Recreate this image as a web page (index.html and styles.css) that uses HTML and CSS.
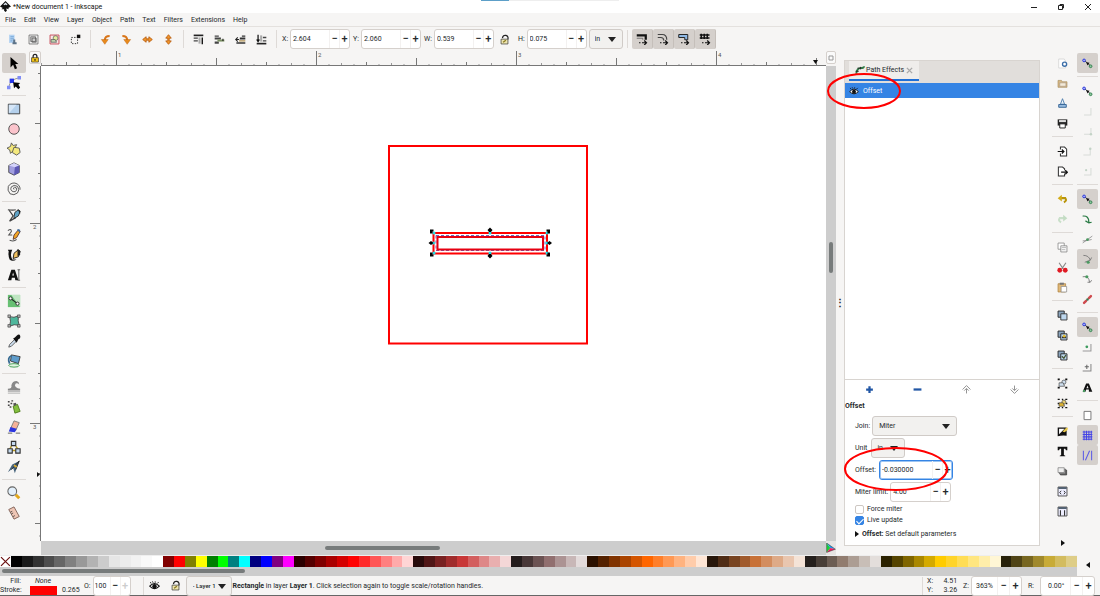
FILE: index.html
```html
<!DOCTYPE html>
<html lang="en">
<head>
<meta charset="utf-8">
<title>*New document 1 - Inkscape</title>
<link rel="stylesheet" href="styles.css">
</head>
<body>
<svg class="defs" aria-hidden="true">
  <symbol id="logo" viewBox="0 0 16 16"><path d="M8 0 16 8 12 10 13 12 9 11 10 14 8 16 6 14 6 12 2 12 4 10 0 8Z" fill="#111"/><path d="M8 2 11 5 9 6 8 5 6 6 5 5Z" fill="#dfe6ee"/></symbol>
  <symbol id="layersobj" viewBox="0 0 16 16"><path d="M3 1h8v12H3z" fill="#b4d3f2"/><path d="M5 4h5M5 7h5M5 10h3" stroke="#5b91c9"/><path d="M9 8h3v4h2v3H8v-3h1z" fill="#5d7388"/></symbol>
  <symbol id="selall" viewBox="0 0 16 16"><path d="M1.500 1.500h13v13h-13z" fill="#f4f4f4" stroke="#555"/><path d="M4 4h7v7H4zM6 6h6v6H6z" fill="#ccc" stroke="#555"/></symbol>
  <symbol id="selobj" viewBox="0 0 16 16"><path d="M1.500 1.500h13v13h-13z" fill="#f9e8e8" stroke="#c8505c" stroke-width="1.400"/><circle cx="9.500" cy="6" r="3.500" fill="#e6f0a0" stroke="#555"/><path d="M3 8h6l2 4H3z" fill="#bcd3ad" stroke="#555"/></symbol>
  <symbol id="desel" viewBox="0 0 16 16"><path d="M2 5h9v9H2z" fill="none" stroke="#333" stroke-width="1.400" stroke-dasharray="2 2"/><path d="M10 1h5v5h-5z" fill="#111"/></symbol>
  <symbol id="rotl" viewBox="0 0 16 16"><path d="M14 3Q7 3 7 9" fill="none" stroke="#d9761a" stroke-width="3"/><path d="M2 8h10l-5 7z" fill="#e88a1c" stroke="#b75a08" stroke-width=".6"/></symbol>
  <symbol id="rotr" viewBox="0 0 16 16"><path d="M2 3q7 0 7 6" fill="none" stroke="#d9761a" stroke-width="3"/><path d="M4 8h10l-5 7z" fill="#e88a1c" stroke="#b75a08" stroke-width=".6"/></symbol>
  <symbol id="fliph" viewBox="0 0 16 16"><path d="M1 8 6 4v3h4V4l5 4-5 4V9H6v3z" fill="#f0952c" stroke="#b75a08" stroke-width="1.200"/></symbol>
  <symbol id="flipv" viewBox="0 0 16 16"><path d="M8 1l4 5H9v4h3l-4 5-4-5h3V6H4z" fill="#f0952c" stroke="#b75a08" stroke-width="1.200"/></symbol>
  <symbol id="totop" viewBox="0 0 16 16"><path d="M1 2h14" stroke="#222" stroke-width="2.400"/><path d="M1 5h6v2H1zM1 9h6v2H1z" fill="#444"/><path d="M8 5h3v9H8z" fill="#aaa"/><path d="M13.500 15V5" stroke="#111" stroke-width="2"/></symbol>
  <symbol id="raise" viewBox="0 0 16 16"><path d="M1 2h6v2H1zM1 5h9v3H1zM1 11h6v3H1z" fill="#444"/><path d="M5 8h10v3H5z" fill="#7a8f62"/><path d="M13 10V7" stroke="#222" stroke-width="1.600"/></symbol>
  <symbol id="lower" viewBox="0 0 16 16"><path d="M10 2h5v2h-5zM7 5h8v3H7zM2 12h13v2H2z" fill="#333"/><path d="M6 9h9v2H6z" fill="#b59a62"/><path d="M1 8h5M4 5 1 8l3 3" fill="none" stroke="#222" stroke-width="1.600"/></symbol>
  <symbol id="tobot" viewBox="0 0 16 16"><path d="M1 14h14" stroke="#222" stroke-width="2.400"/><path d="M10 4h5v2h-5zM10 9h5v2h-5z" fill="#444"/><path d="M6 2h3v9H6z" fill="#aaa"/><path d="M3 1v10M1 8l2 3 2-3" fill="none" stroke="#111" stroke-width="1.800"/></symbol>
  <symbol id="lock" viewBox="0 0 16 16"><path d="M5 8V5a3 3 0 0 1 6 0v3" fill="none" stroke="#222" stroke-width="2"/><path d="M2.500 7.500h11v7h-11z" fill="#f5c518" stroke="#222"/><path d="M8 9.500v3" stroke="#222" stroke-width="2"/></symbol>
  <symbol id="unlock" viewBox="0 0 16 16"><path d="M5 6Q6 1 10 2t3 6" fill="none" stroke="#222" stroke-width="1.800"/><path d="M3 7.500h10v7H3z" fill="#eee6b0" stroke="#333"/><path d="M6 12l4-3" stroke="#8a7a20" stroke-width="2"/></symbol>
  <symbol id="trstroke" viewBox="0 0 16 16"><path d="M1 3h12v6" fill="none" stroke="#111" stroke-width="3"/><path d="M1 7h8v2" fill="none" stroke="#555"/><path d="M4 13h2M8 13h6M11 10l3 3-3 3" fill="none" stroke="#111" stroke-width="1.600"/></symbol>
  <symbol id="trcorner" viewBox="0 0 16 16"><path d="M1 2h6q6 0 6 7M1 6h4q4 0 4 4" fill="none" stroke="#444" stroke-width="1.600"/><path d="M4 13h2M8 13h6M11 10l3 3-3 3" fill="none" stroke="#111" stroke-width="1.600"/></symbol>
  <symbol id="trgrad" viewBox="0 0 16 16"><path d="M1 2h12v7H9V6H1z" fill="#8fb8e4" stroke="#222" stroke-width="1.300"/><path d="M4 13h2M8 13h6M11 10l3 3-3 3" fill="none" stroke="#111" stroke-width="1.600"/></symbol>
  <symbol id="trpat" viewBox="0 0 16 16"><path d="M1 2.500h13M1 6.500h13M3 1v7M7 1v7M11 1v7" stroke="#111" stroke-width="2"/><path d="M4 13h2M8 13h6M11 10l3 3-3 3" fill="none" stroke="#111" stroke-width="1.600"/></symbol>
  <symbol id="t-select" viewBox="0 0 16 16"><path d="M4 1v12l3-3 2 5 2.500-1L9.500 9H13z" fill="#000"/></symbol>
  <symbol id="t-node" viewBox="0 0 16 16"><path d="M2 13Q3 4 14 2" fill="none" stroke="#888"/><path d="M0 11h4v4H0zM12 0h4v4h-4z" fill="#7f8cf5"/><path d="M3 3h5v5H3z" fill="#2737e8"/><path d="M7 7l8 1-2 2 2 3-2 2-3-3-2 2z" fill="#000"/></symbol>
  <symbol id="t-rect" viewBox="0 0 16 16"><path d="M1.500 2.500h13v11h-13z" fill="#b4d0ec" stroke="#333"/><path d="M2 13V3h9z" fill="#d5e6f8"/></symbol>
  <symbol id="t-circ" viewBox="0 0 16 16"><circle cx="8" cy="8" r="6" fill="#fbc4cc" stroke="#444"/></symbol>
  <symbol id="t-star" viewBox="0 0 16 16"><path d="M5 1l2 3 4-1-2 4 2 3-4 0-3 3-1-4-3-2 4-2z" fill="#f3e77a" stroke="#555"/><path d="M8 6l6 1 1 5-4 3-5-3z" fill="#f5ea7e" stroke="#555"/></symbol>
  <symbol id="t-cube" viewBox="0 0 16 16"><path d="M8 1l6 3v8l-6 3-6-3V4z" fill="#a19edf" stroke="#444"/><path d="M2 4l7 2 5-2-6-3z" fill="#d4d3fa"/><path d="M9 6l5-2v8l-6 3z" fill="#5c57b4"/></symbol>
  <symbol id="t-spiral" viewBox="0 0 16 16"><path d="M8 8.500q-1.500-2 .5-2.500 3 0 2.500 3-1 3-4 2Q3 9.500 5 5.500q3-3 7-.5 3 4 0 7.500-4 3.500-8.500 1-3.500-4-2-8.500Q4 .8 9 1.200q6 1.500 6 7.500" fill="none" stroke="#555" stroke-width="1.100"/></symbol>
  <symbol id="t-pen" viewBox="0 0 16 16"><path d="M1 2q6 1 9 0M2 2l5 7-4 6 7-4" fill="none" stroke="#444" stroke-width="1.400"/><path d="M8 10l1-5 4-3 2 2-2 5-5 3z" fill="#5fa3c7" stroke="#222"/><path d="M12 1l3 2v4z" fill="#222"/></symbol>
  <symbol id="t-pencil" viewBox="0 0 16 16"><path d="M1 3q4-3 4 1L2 8h4M3 14q5 2 8-1" fill="none" stroke="#555" stroke-width="1.200"/><path d="M7 13l1-5 5-6 2 2-4 7z" fill="#f4a623" stroke="#533"/><path d="M12 1l3 1v3l-3-2z" fill="#3a6ea5"/></symbol>
  <symbol id="t-callig" viewBox="0 0 16 16"><path d="M1 2h5Q3 8 6 13h5Q6 16 3 13 1 8 2 4z" fill="#111"/><path d="M7 12l1-6 5-4 2 2-2 6z" fill="#f0c060" stroke="#111"/><path d="M12 1l3 2v5l-3 1z" fill="#222"/></symbol>
  <symbol id="t-text" viewBox="0 0 16 16"><path d="M1 14 5 2h4l4 12H9.500L9 11H5.500L5 14zM6 8.500h2L7 5z" fill="#111" fill-rule="evenodd"/><path d="M12 2h3M12 14h3M13.500 2v12" stroke="#555"/></symbol>
  <symbol id="t-grad" viewBox="0 0 16 16"><path d="M1 1h14v14H1z" fill="#67c073"/><path d="M5 1h10v14z" fill="#bfe5c2"/><path d="M4 5l8 6" stroke="#222" stroke-width="1.300"/><circle cx="4" cy="5" r="1.800" fill="#fff" stroke="#222"/><circle cx="12" cy="11" r="1.800" fill="#fff" stroke="#222"/></symbol>
  <symbol id="t-mesh" viewBox="0 0 16 16"><path d="M3 3q5 2 10-1-1 6 1 11-6-2-11 1 2-6 0-11z" fill="#4fb79c" stroke="#444"/><path d="M1 1h3v3H1zM12 1h3v3h-3zM1 12h3v3H1zM12 12h3v3h-3z" fill="#aaa" stroke="#444" stroke-width=".7"/></symbol>
  <symbol id="t-drop" viewBox="0 0 16 16"><path d="M2 15l1-3 6-6 2 2-6 6z" fill="#cde" stroke="#555"/><path d="M7 5l2-1 2-2q3-3 4 0t-2 4l-1 2-1 2z" fill="#111"/></symbol>
  <symbol id="t-bucket" viewBox="0 0 16 16"><path d="M5 1l10 2-2 8-9-3z" fill="#5e9ccb" stroke="#333"/><path d="M5 2Q0 4 3 11" fill="none" stroke="#356a92" stroke-width="2"/><ellipse cx="8" cy="13" rx="6" ry="2" fill="#dff3e0" stroke="#37984b"/></symbol>
  <symbol id="t-tweak" viewBox="0 0 16 16"><path d="M1 10q5 0 4-4 1-5 6-5 3 1 3 4-2-2-4-1-2 2 0 4 2 2 5 2v2H1z" fill="#888"/><path d="M1 13h14M1 15h14" stroke="#aaa"/></symbol>
  <symbol id="t-spray" viewBox="0 0 16 16"><path d="M7 7l5-2 3 8-6 2z" fill="#84bf3f" stroke="#4b7a18"/><path d="M7 4l3-1 1 2-3 2z" fill="#555"/><path d="M1 2h2M4 4h2M1 6h2M5 1h2M3 8h2" stroke="#444" stroke-width="1.600"/></symbol>
  <symbol id="t-eraser" viewBox="0 0 16 16"><path d="M8 1l6 2-4 9-6-2z" fill="#f6b298" stroke="#777"/><path d="M4 8l7 2-2 4-7-1z" fill="#2b35e0"/><path d="M1 15h5M10 15h5" stroke="#555"/></symbol>
  <symbol id="t-conn" viewBox="0 0 16 16"><path d="M5 7l-2 4M10 7l3 4M6 12h4" stroke="#b89a20" stroke-width="1.600"/><path d="M5 1.500h5v5H5zM1 10h5v5H1zM10 10h5v5h-5z" fill="#c5daef" stroke="#333" stroke-width="1.300"/></symbol>
  <symbol id="t-lpe" viewBox="0 0 16 16"><path d="M14 1 6 5 1 14l6-5 2 6 2-6z" fill="#47647c"/><path d="M14 1 5 11M14 1l-4 10" stroke="#222"/><path d="M8 6l3 2" stroke="#e0b030" stroke-width="2"/></symbol>
  <symbol id="t-zoom" viewBox="0 0 16 16"><path d="M10 10l4 4" stroke="#e2a81d" stroke-width="3.500"/><circle cx="6" cy="6" r="5" fill="#e3f0fb" stroke="#666" stroke-width="1.200"/></symbol>
  <symbol id="t-measure" viewBox="0 0 16 16"><path d="M2 4l6-3 6 11-6 3z" fill="#efc6b5" stroke="#7a5a50"/><path d="M4 7l2-1M5 9l2-1M7 12l2-1" stroke="#444"/></symbol>
  <symbol id="c-new" viewBox="0 0 16 16"><path d="M2.500 1.500h8l2 3v10h-10z" fill="#fff" stroke="#ccc"/><circle cx="11" cy="9" r="3" fill="#fff" stroke="#3c6ea8" stroke-width="2"/></symbol>
  <symbol id="c-open" viewBox="0 0 16 16"><path d="M1.500 3.500h5l1 2h7v8h-13z" fill="#d8b984" stroke="#a88d5f"/><path d="M4 7h9v5H4z" fill="#f3ead8" stroke="#a98"/></symbol>
  <symbol id="c-save" viewBox="0 0 16 16"><path d="M8 1l3 8H5z" fill="#eef4fa" stroke="#4778aa" stroke-width="1.300"/><path d="M2.500 9.500h11v4h-11z" fill="#9bbfe2" stroke="#2d5d90" stroke-width="1.300"/></symbol>
  <symbol id="c-print" viewBox="0 0 16 16"><path d="M1 2h14v9H1z" fill="#222"/><path d="M3 3h10v3H3z" fill="#ddd"/><path d="M4 8.500h8v6H4z" fill="#fff" stroke="#222" stroke-width="1.400"/></symbol>
  <symbol id="c-import" viewBox="0 0 16 16"><path d="M5 5V1.500h6l3 3v10H5V11" fill="#fff" stroke="#333" stroke-width="1.500"/><path d="M1 8h8M7 5l3 3-3 3" fill="none" stroke="#111" stroke-width="1.800"/></symbol>
  <symbol id="c-export" viewBox="0 0 16 16"><path d="M11 6V4L8 1.500H2v13h9V11" fill="#fff" stroke="#333" stroke-width="1.500"/><path d="M6 9h8M12 6l3 3-3 3" fill="none" stroke="#111" stroke-width="1.800"/></symbol>
  <symbol id="c-undo" viewBox="0 0 16 16"><path d="M5 6h7q3 4-2 6" fill="none" stroke="#b8940a" stroke-width="3"/><path d="M1 6l6-5v10z" fill="#d3ac18"/></symbol>
  <symbol id="c-redo" viewBox="0 0 16 16"><path d="M11 6H4q-3 4 2 6" fill="none" stroke="#c9dfc9" stroke-width="3"/><path d="M15 6 9 1v10z" fill="#c3dcc3"/></symbol>
  <symbol id="c-copy" viewBox="0 0 16 16"><path d="M1.500 1.500h9v9h-9z" fill="#fff" stroke="#777"/><path d="M5.500 5.500h9v9h-9z" fill="#f4f4f4" stroke="#777"/><path d="M7 8h6M7 11h5" stroke="#aaa"/></symbol>
  <symbol id="c-cut" viewBox="0 0 16 16"><path d="M3 1l6 9M13 1 7 10" stroke="#888" stroke-width="1.600"/><circle cx="4" cy="12" r="3.500" fill="#e01b24"/><circle cx="12" cy="12" r="3.500" fill="#e01b24"/></symbol>
  <symbol id="c-paste" viewBox="0 0 16 16"><path d="M1.500 2.500h11v12h-11z" fill="#e0b878" stroke="#a97c38"/><path d="M4 1h6v3H4z" fill="#777"/><path d="M6 6.500h8v8H6z" fill="#fff" stroke="#888"/></symbol>
  <symbol id="c-dup" viewBox="0 0 16 16"><path d="M1.500 1.500h9v9h-9z" fill="#8aa4bc" stroke="#222" stroke-width="1.300"/><path d="M5.500 5.500h9v9h-9z" fill="#bdd7ee" stroke="#333" stroke-width="1.300"/></symbol>
  <symbol id="c-clone" viewBox="0 0 16 16"><path d="M1.500 1.500h9v9h-9z" fill="#8aa4bc" stroke="#222" stroke-width="1.300"/><path d="M5.500 5.500h9v9h-9z" fill="#bdd7ee" stroke="#222" stroke-width="1.300"/><path d="M7 12h6v-3H8z" fill="#222"/><circle cx="10.500" cy="9" r="2" fill="#e3bc30"/></symbol>
  <symbol id="c-unclone" viewBox="0 0 16 16"><path d="M1.500 1.500h9v9h-9z" fill="#8aa4bc" stroke="#222" stroke-width="1.300"/><path d="M5.500 5.500h9v9h-9z" fill="#bdd7ee" stroke="#222" stroke-width="1.300"/><path d="M7 9l3 3 3-5" fill="none" stroke="#453" stroke-width="1.800"/></symbol>
  <symbol id="c-group" viewBox="0 0 16 16"><path d="M1 2h3M12 2h3M1 14h3M12 14h3" stroke="#111" stroke-width="2.400"/><circle cx="10" cy="6" r="3" fill="#cfe0f0" stroke="#444"/><path d="M3 7h6l2 5H3z" fill="#cfe0f0" stroke="#444"/></symbol>
  <symbol id="c-ungroup" viewBox="0 0 16 16"><path d="M1 2h3M7 2h2M12 2h3M1 14h3M7 14h2M12 14h3M2 7v2M14 7v2" stroke="#111" stroke-width="2"/><circle cx="10" cy="6" r="3" fill="#e8cf70" stroke="#444"/><path d="M3 7h6l2 5H3z" fill="#e0b530" stroke="#444"/></symbol>
  <symbol id="c-fill" viewBox="0 0 16 16"><path d="M1 2h13v12q-7-1-13 1z" fill="#111"/><path d="M3 12V4h8z" fill="#fff"/><path d="M8 8l5-5 3-1-1 4-4 3z" fill="#e8c84a"/></symbol>
  <symbol id="c-text" viewBox="0 0 16 16"><path d="M1 1h14v5h-2L12 4h-2v9l2 1v1H4v-1l2-1V4H4L3 6H1z" fill="#111"/></symbol>
  <symbol id="c-layers" viewBox="0 0 16 16"><path d="M5 6h9v7H5z" fill="#666" stroke="#333"/><path d="M3.500 4.500h9v7h-9z" fill="#999" stroke="#555"/><path d="M1.500 2.500h9v7h-9z" fill="#eee" stroke="#777"/></symbol>
  <symbol id="c-xml" viewBox="0 0 16 16"><path d="M1.500 1.500h13v13h-13z" fill="#eef" stroke="#444" stroke-width="1.300"/><path d="M2 3h12" stroke="#456" stroke-width="2.500"/><path d="M6 7 4 9.500 6 12M10 7l2 2.500-2 2.500" fill="none" stroke="#222" stroke-width="1.300"/></symbol>
  <symbol id="c-align" viewBox="0 0 16 16"><path d="M1.500 1.500h13v13h-13z" fill="#eef" stroke="#444" stroke-width="1.300"/><path d="M2 3h12" stroke="#456" stroke-width="2.500"/><path d="M5 6v8M11 6v8" stroke="#333" stroke-width="1.600"/></symbol>
  <symbol id="s-main" viewBox="0 0 16 16"><path d="M4 4l9 8" stroke="#333" stroke-width="1.300"/><circle cx="3" cy="3.500" r="2" fill="#aab0ff" stroke="#2230d8" stroke-width="1.300"/><path d="M6 6l5 1-3 4z" fill="#111"/><circle cx="12.500" cy="12" r="2" fill="#8fc9a1" stroke="#2b7a48" stroke-width="1.300"/></symbol>
  <symbol id="s-corner" viewBox="0 0 16 16"><path d="M3 13h10V3" fill="none" stroke="#d7dcd7" stroke-width="1.500"/></symbol>
  <symbol id="s-cornerdot" viewBox="0 0 16 16"><path d="M3 12h10V3" fill="none" stroke="#d7dcd7" stroke-width="1.500"/><circle cx="13" cy="12" r="1.800" fill="#c3d3c6"/></symbol>
  <symbol id="s-cornertop" viewBox="0 0 16 16"><path d="M2 13h10V3" fill="none" stroke="#d7dcd7" stroke-width="1.500"/><circle cx="12" cy="4" r="1.800" fill="#c3d3c6"/></symbol>
  <symbol id="s-cornermid" viewBox="0 0 16 16"><path d="M3 13h10V3" fill="none" stroke="#d7dcd7" stroke-width="1.500"/><circle cx="6" cy="6" r="1.600" fill="#c3d3c6"/></symbol>
  <symbol id="s-path" viewBox="0 0 16 16"><path d="M1 3q9-1 9 9M5 10l5 3 4-1" fill="none" stroke="#287a43" stroke-width="1.800"/></symbol>
  <symbol id="s-cross" viewBox="0 0 16 16"><path d="M1 13 15 3M1 10q6 0 13-2" fill="none" stroke="#777"/><circle cx="8" cy="8" r="2" fill="#4a9960"/></symbol>
  <symbol id="s-cusp" viewBox="0 0 16 16"><path d="M2 2q8 0 10 7l-8 3M12 9l2-4" fill="none" stroke="#777" stroke-width="1.300"/><circle cx="9" cy="12" r="2.300" fill="#4a9960"/></symbol>
  <symbol id="s-smooth" viewBox="0 0 16 16"><path d="M1 4q9-2 10 8M8 12h4l2-3" fill="none" stroke="#777" stroke-width="1.300"/><circle cx="7" cy="4" r="2.300" fill="#4a9960"/></symbol>
  <symbol id="s-mid" viewBox="0 0 16 16"><path d="M3 13 13 3" stroke="#822" stroke-width="1"/><path d="M3 13l3-3M10 6l3-3" stroke="#cf4a4e" stroke-width="3.500" stroke-linecap="round"/><circle cx="8" cy="8" r="1.800" fill="#3a7950"/></symbol>
  <symbol id="s-center" viewBox="0 0 16 16"><path d="M1 13h12V3" fill="none" stroke="#999" stroke-width="1.500"/><circle cx="7" cy="7" r="2" fill="#3d9b5e"/></symbol>
  <symbol id="s-rot" viewBox="0 0 16 16"><path d="M1 13h12V3" fill="none" stroke="#888" stroke-width="1.500"/><path d="M7 4v6M4 7h6" stroke="#666" stroke-width="1.500"/></symbol>
  <symbol id="s-text" viewBox="0 0 16 16"><path d="M1 14 6 2h4l5 12h-5v-3H6l-1 3zM6.500 9h3L8 5z" fill="#111" fill-rule="evenodd"/><circle cx="3" cy="13" r="1.800" fill="#4a9960"/></symbol>
  <symbol id="s-page" viewBox="0 0 16 16"><path d="M3 2h10v12H3z" fill="#fff" stroke="#777" stroke-width="1.400"/></symbol>
  <symbol id="s-grid" viewBox="0 0 16 16"><path d="M1 3h14M1 6.500h14M1 10h14M1 13.500h14M3 1v14M6.500 1v14M10 1v14M13.500 1v14" stroke="#4747e6" stroke-width="1.500"/></symbol>
  <symbol id="s-guide" viewBox="0 0 16 16"><path d="M2 1v14M14 1v14M5 15 11 1" stroke="#5b5be6" stroke-width="1.500"/></symbol>
  <symbol id="eye" viewBox="0 0 16 16"><path d="M1 9q7-8 14 0-7 7-14 0z" fill="#fff" stroke="#111" stroke-width="1.500"/><circle cx="8" cy="9" r="3.200" fill="#111"/><path d="M3 5 2 3M6 4 5 2M9 4V2M12 5l2-2" stroke="#111" stroke-width="1.300"/></symbol>
  <symbol id="fx" viewBox="0 0 16 16"><path d="M2 14Q3 5 9 5t5-3" fill="none" stroke="#2f7a45" stroke-width="3"/><path d="M1 10h5M4 5h5M9 7V3" stroke="#222" stroke-width="1.500"/></symbol>
  <symbol id="up" viewBox="0 0 16 16"><path d="M1 8l7-7 7 7M4 10l4-4 4 4M8 7v8" fill="none" stroke="#888" stroke-width="1.600"/></symbol>
  <symbol id="down" viewBox="0 0 16 16"><path d="M1 8l7 7 7-7M4 6l4 4 4-4M8 1v8" fill="none" stroke="#888" stroke-width="1.600"/></symbol>
  <symbol id="cms" viewBox="0 0 16 16"><path d="M1 0v15l6-7z" fill="#19d23a"/><path d="M1 0l14 10-8-2z" fill="#1898ed"/><path d="M15 10 7 8 1 15z" fill="#ef2060"/><path d="M1 0l14 10-14 5z" fill="none" stroke="#333" stroke-width=".8"/></symbol>
</svg>

<div class="app">
  <header class="titlebar">
    <svg class="logo"><use href="#logo"/></svg>
    <h1>*New document 1 - Inkscape</h1>
    <div class="shade"></div>
    <div class="winbtns">
      <button aria-label="Minimize"><svg viewBox="0 0 8 8"><path d="M1 4.500h6" stroke="#222"/></svg></button>
      <button aria-label="Restore"><svg viewBox="0 0 8 8"><path d="M1.500 2.500h4v4h-4zM3 2.500v-1h3.500V5H6" fill="none" stroke="#222"/></svg></button>
      <button aria-label="Close"><svg viewBox="0 0 8 8"><path d="M1 1l6 6M7 1 1 7" stroke="#222"/></svg></button>
    </div>
  </header>
  <nav class="menubar">
    <button>File</button><button>Edit</button><button>View</button><button>Layer</button><button>Object</button><button>Path</button><button>Text</button><button>Filters</button><button>Extensions</button><button>Help</button>
  </nav>
  <div class="toolbar">
    <div class="icons" data-icons="layersobj selall selobj desel | rotl rotr fliph flipv | totop raise lower tobot |"></div>
    <label class="field"><span>X:</span><span class="spin"><input value="2.604"><button>−</button><button>+</button></span></label>
    <label class="field"><span>Y:</span><span class="spin"><input value="2.060"><button>−</button><button>+</button></span></label>
    <label class="field"><span>W:</span><span class="spin"><input value="0.539"><button>−</button><button>+</button></span></label>
    <button class="ibtn" aria-label="Lock ratio"><svg><use href="#unlock"/></svg></button>
    <label class="field"><span>H:</span><span class="spin"><input value="0.075"><button>−</button><button>+</button></span></label>
    <span class="drop unit"><select aria-label="Unit"><option>in</option></select></span>
    <i class="vsep"></i>
    <div class="icons toggles" data-icons="trstroke* trcorner* trgrad* trpat*"></div>
  </div>

  <div class="body">
    <div class="left">
      <main class="work">
        <aside class="tools" data-icons="t-select* t-node | t-rect t-circ t-star t-cube t-spiral | t-pen t-pencil t-callig t-text | t-grad t-mesh t-drop t-bucket | t-tweak t-spray t-eraser t-conn t-lpe | t-zoom t-measure"></aside>
        <section class="view">
          <button class="guidelock" aria-label="Lock guides"><svg><use href="#lock"/></svg></button>
          <svg class="hruler">
            <defs><pattern id="hp" x="75" width="200" height="15" patternUnits="userSpaceOnUse">
              <path d="M.5 0v15M50.500 11v4M100.500 7v8M150.500 11v4" stroke="#777" fill="none"/>
              <path d="M13 13v2M25.500 12v3M38 13v2M63 13v2M75.500 12v3M88 13v2M113 13v2M125.500 12v3M138 13v2M163 13v2M175.500 12v3M188 13v2" stroke="#999" fill="none"/></pattern></defs>
            <rect width="100%" height="15" fill="url(#hp)"/>
            <path d="M0 14.500h2000" stroke="#777"/>
            <text x="77" y="6">1</text><text x="277" y="6">2</text><text x="477" y="6">3</text><text x="677" y="6">4</text>
            <path d="M772 9h5l-2.500 4z" fill="#111"/>
          </svg>
          <button class="zoomlock" aria-label="Sticky zoom"><svg viewBox="0 0 8 8"><path d="M2 2h4v4H2z" fill="none" stroke="#999"/></svg></button>
          <svg class="vruler">
            <defs><pattern id="vp" y="157" width="12" height="200" patternUnits="userSpaceOnUse">
              <path d="M1 .5h11M9 50.500h3M6 100.500h6M9 150.500h3" stroke="#777" fill="none"/>
              <path d="M10 13h2M10 25.500h2M10 38h2M10 63h2M10 75.500h2M10 88h2M10 113h2M10 125.500h2M10 138h2M10 163h2M10 175.500h2M10 188h2" stroke="#999" fill="none"/></pattern></defs>
            <rect width="12" height="100%" fill="url(#vp)"/>
            <path d="M11.500 0v2000" stroke="#777"/>
            <text x="4" y="163">2</text><text x="4" y="363">3</text>
            <path d="M8 406v5l3-2.500z" fill="#111"/>
          </svg>
          <svg class="canvas">
            <g transform="translate(-41 -66)" fill="none">
              <rect x="389" y="146" width="198" height="197.500" stroke="#f00" stroke-width="2"/>
              <rect x="433.500" y="233" width="113.500" height="20.500" stroke="#f00" stroke-width="2"/>
              <rect x="436" y="235.500" width="109" height="15" stroke="#4a3fb0" stroke-width=".8" stroke-dasharray="3 2"/>
              <rect x="437.500" y="237" width="105.500" height="12.500" stroke="#e60012" stroke-width="2"/>
              <g fill="#1fe0e8">
                <circle cx="434" cy="233" r="1.500"/><circle cx="490" cy="233" r="1.500"/><circle cx="547" cy="233" r="1.500"/>
                <circle cx="433.500" cy="243" r="1.500"/><circle cx="547" cy="243" r="1.500"/>
                <circle cx="434" cy="253" r="1.500"/><circle cx="490" cy="253" r="1.500"/><circle cx="547" cy="253" r="1.500"/>
              </g>
              <path d="M430 229.500h3.500v2h-1v2H430zM550 229.500h-3.500v2h1v2h2.500zM430 256.500h3.500v-2h-1v-2H430zM550 256.500h-3.500v-2h1v-2h2.500zM490 227.500l2.500 2.500-1.500 2h-2l-1.500-2zM490 258.500l2.500-2.500-1.500-2h-2l-1.500 2zM428.500 243l2.500-2 2.500 2-2.500 2zM552 243l-2.500-2-2.500 2 2.500 2z" fill="#000"/>
            </g>
          </svg>
          <div class="vscroll"><i></i></div>
          <div class="hscroll"><i></i></div>
          <button class="cms" aria-label="Color management"><svg><use href="#cms"/></svg></button>
        </section>
        <div class="grip">⋮</div>
        <section class="dialog">
          <div class="tabs"><button class="tab"><svg><use href="#fx"/></svg>Path Effects<svg class="x" viewBox="0 0 8 8"><path d="M1 1l6 6M7 1 1 7" stroke="#aaa" stroke-width="1.600"/></svg></button></div>
          <div class="list"><div class="row"><svg><use href="#eye"/></svg>Offset</div></div>
          <div class="acts">
            <button aria-label="Add"><svg viewBox="0 0 16 16"><path d="M8 2v12M2 8h12" stroke="#2257a5" stroke-width="4"/></svg></button>
            <button aria-label="Remove"><svg viewBox="0 0 16 16"><path d="M1 8h14" stroke="#2257a5" stroke-width="4"/></svg></button>
            <button aria-label="Up"><svg><use href="#up"/></svg></button>
            <button aria-label="Down"><svg><use href="#down"/></svg></button>
          </div>
          <h2>Offset</h2>
          <div class="form">
            <label class="field"><span>Join:</span><span class="drop join"><select><option>Miter</option></select></span></label>
            <label class="field"><span>Unit</span><span class="drop unit"><select><option>in</option></select></span></label>
            <label class="field"><span>Offset:</span><span class="spin wide focus"><input value="-0.030000"><button>−</button><button>+</button></span></label>
            <label class="field"><span>Miter limit:</span><span class="spin"><input value="4.00"><button>−</button><button>+</button></span></label>
            <div class="checks">
              <label class="check"><input type="checkbox">Force miter</label>
              <label class="check"><input type="checkbox" checked>Live update</label>
            </div>
            <button class="expander"><i class="tri"></i><span><b>Offset:</b> Set default parameters</span></button>
          </div>
          <svg class="mark first"><ellipse cx="37" cy="18" rx="36" ry="17"/></svg>
          <svg class="mark second"><ellipse cx="52" cy="22" rx="51" ry="21"/></svg>
        </section>
        <aside class="commands"><div data-icons="c-new c-open c-save c-print | c-import c-export | c-undo c-redo | c-copy c-cut c-paste | c-dup c-clone c-unclone | c-group c-ungroup | c-fill c-text c-layers c-xml c-align"></div><button class="more" aria-label="More"><i class="tri"></i></button></aside>
      </main>
      <div class="palette"></div>
      <div class="pscroll"><i></i></div>
    </div>
    <aside class="snap"><div data-icons="s-main* | s-main s-corner s-cornerdot s-cornertop s-cornermid | s-main* s-path s-cross s-cusp* s-smooth s-mid | s-main* s-center s-rot s-text | s-page s-grid* s-guide*"></div><button class="more" aria-label="Palette menu"><i class="tri back"></i></button></aside>
  </div>

  <footer class="status">
    <div class="style">
      <span class="end">Fill:</span><em>None</em><span></span>
      <span class="end">Stroke:</span><i class="sw"></i><span>0.265</span>
    </div>
    <label class="field"><span>O:</span><span class="spin op"><input value="100"><button>−</button><button disabled>+</button></span></label>
    <i class="vsep"></i>
    <button class="ibtn" aria-label="Visibility"><svg><use href="#eye"/></svg></button>
    <button class="ibtn" aria-label="Lock layer"><svg><use href="#unlock"/></svg></button>
    <span class="drop layer"><select aria-label="Layer"><option>- Layer 1</option></select></span>
    <p><b>Rectangle</b> in layer <b>Layer 1</b>. Click selection again to toggle scale/rotation handles.</p>
    <i class="vsep"></i>
    <dl><dt>X:</dt><dd>4.51</dd><dt>Y:</dt><dd>3.26</dd></dl>
    <label class="field"><span>Z:</span><span class="spin zoom"><input value="363%"><button>−</button><button>+</button></span></label>
    <label class="field rot"><span>R:</span><span class="spin zoom rotate"><input value="0.00°"><button>−</button><button>+</button></span></label>
  </footer>
</div>
<script src="app.js"></script>
</body>
</html>
```
FILE: styles.css
```css
* { box-sizing: border-box; }
body { margin: 0; font: 7px/10px Roboto, "Open Sans", sans-serif; color: #24292b; }
button, input, select { font: inherit; color: inherit; margin: 0; padding: 0; border: 0; background: none; }
button { display: inline-flex; align-items: center; justify-content: center; }
svg { display: block; }
i { font-style: normal; }
.defs { position: absolute; width: 0; height: 0; }
.app { height: 100vh; display: flex; flex-direction: column; background: #f6f5f4; border-bottom: 1px solid #666; }

.titlebar { height: 13px; display: flex; align-items: center; background: #fff; color: #111; position: relative; }
.logo { width: 11px; height: 11px; margin-right: 2px; }
h1 { margin: 0; font-size: 7px; font-weight: 400; flex: 1; }
.shade { position: absolute; top: 0; left: 481px; width: 138px; height: 1px; background: linear-gradient(90deg, #5d9fc8 28px, #eee 28px); }
.winbtns { display: flex; gap: 19px; padding-right: 8px; }
.winbtns svg { width: 8px; height: 8px; }

.menubar { height: 14px; display: flex; align-items: center; gap: 8px; padding-left: 5px; border-bottom: 1px solid #e4e1de; }
.toolbar { height: 24px; display: flex; align-items: center; padding-left: 2px; }
.icons { display: flex; align-items: center; }
.ibtn { width: 21px; height: 20px; border-radius: 2px; }
.ibtn svg { width: 11px; height: 11px; }
.ibtn.on { background: #d5d0cc; }
.toggles .ibtn { border-right: 1px solid #c5bfba; }
.toggles svg { width: 12px; height: 12px; }
.vsep { width: 1px; height: 18px; margin: 0 4px; background: #dedad7; }
.hsep { display: block; height: 1px; background: #dedad7; }

.field { display: flex; align-items: center; gap: 2px; white-space: nowrap; }
.toolbar .field { margin-left: 3px; }
.toolbar .icons + .field { margin-left: 1px; }
.spin { display: flex; width: 61px; height: 20px; border: 1px solid #d5d0cc; border-radius: 3px; background: #fff; }
.spin input { flex: 1; min-width: 0; padding-left: 2px; outline: 0; }
.spin button { width: 10px; font-size: 11px; font-weight: 500; border-left: 1px solid #f3f1f0; }
.spin button:disabled { color: #ccc; }
.drop { position: relative; display: flex; height: 20px; border: 1px solid #d0cbc7; border-radius: 3px; background: #f2f1ef; }
.drop select { appearance: none; flex: 1; padding: 0 6px; outline: 0; }
.drop::after { content: ""; position: absolute; right: 6px; top: 7px; border: 4px solid transparent; border-top: 5px solid #222; border-bottom: 0; pointer-events: none; }
.unit { width: 34px; }
.toolbar .spin { width: 60px; }
.toolbar .unit { margin-left: 2px; }

.body { flex: 1; min-height: 0; display: flex; }
.left { flex: 1; min-width: 0; display: flex; flex-direction: column; }
.work { flex: 1; min-height: 0; display: flex; }
.tools { width: 29px; padding: 2px 3px 2px 2px; }
.tools .ibtn { display: flex; width: 24px; height: 20px; }
.tools .ibtn svg { width: 14px; height: 14px; }
.tools .hsep { margin: 2px 0 3px; }

.view { flex: 1; min-width: 0; display: grid; grid-template: 15px 1fr 14px / 12px 1fr 10px; }
.view text { font-size: 6px; fill: #555; }
.hruler, .vruler, .canvas { width: 100%; height: 100%; }
.guidelock, .zoomlock { border: 1px solid #d5d0cc; border-radius: 2px; background: #fafafa; height: 13px; }
.guidelock svg { width: 10px; height: 10px; }
.zoomlock svg { width: 8px; height: 8px; }
.canvas { background: #fff; }
.vscroll { background: #cdcdcd; display: flex; justify-content: center; padding-top: 176px; }
.vscroll i { width: 4px; height: 31px; border-radius: 2px; background: #777b7b; }
.hscroll { grid-column: 1 / 3; margin-left: 12px; background: #cdcdcd; padding: 5px 0 0 284px; }
.hscroll i { display: block; width: 115px; height: 4px; border-radius: 2px; background: #777b7b; }
.cms { background: #e6e4e2; }
.cms svg { width: 10px; height: 10px; }

.grip { width: 8px; display: flex; align-items: center; justify-content: center; font-size: 10px; font-weight: 700; }
.dialog { position: relative; width: 196px; margin: 9px 6px 9px 0; display: flex; flex-direction: column; border: 1px solid #d8d4d0; background: #fff; }
.tabs { height: 22px; padding-left: 4px; background: #e1dedb; }
.tab { height: 20px; padding: 0 6px; gap: 1px; background: #efedeb; border-bottom: 2px solid #1f6fd6; }
.tab svg { width: 10px; height: 10px; }
.tab .x { width: 7px; height: 7px; margin-left: 1px; }
.list { flex: 1; border-bottom: 1px solid #d8d4d0; }
.row { height: 15px; display: flex; align-items: center; gap: 4px; padding-left: 4px; background: #3584e4; color: #fff; }
.row svg { width: 10px; height: 10px; }
.acts { height: 19px; display: grid; grid-template-columns: repeat(4, 1fr); }
.acts svg { width: 9px; height: 9px; }
h2 { margin: 1px 0 4px; font-size: 7px; line-height: 12px; }
.form { display: flex; flex-direction: column; align-items: flex-start; gap: 2px; padding: 0 0 4px 10px; }
.join { width: 85px; }
.unit select { padding-left: 5px; }
.form .unit { margin-left: 2px; }
.wide { width: 74px; margin-left: 1px; }
.focus { border-color: #3584e4; box-shadow: inset 0 0 0 1px #9cc4f2; }
.checks { display: grid; gap: 1px; }
.check { height: 10px; display: flex; align-items: center; gap: 3px; }
.check input { appearance: none; width: 9px; height: 9px; border: 1px solid #cdc7c2; border-radius: 2px; background: #fff; }
.check input:checked { border-color: #3584e4; background: #3584e4; display: flex; justify-content: center; }
.check input:checked::before { content: ""; width: 3px; height: 6px; border: solid #fff; border-width: 0 1px 1px 0; transform: rotate(45deg); }
.expander { height: 14px; gap: 3px; }
.tri { display: inline-block; border: 3px solid transparent; border-left: 4px solid #111; border-right: 0; }
.tri.back { border-left: 0; border-right: 4px solid #111; }
.mark { position: absolute; overflow: visible; pointer-events: none; fill: none; stroke: #f00; stroke-width: 2px; }
.first { left: -18px; top: 12px; width: 74px; height: 36px; }
.second { left: -1px; bottom: 54px; width: 104px; height: 44px; }

.commands { width: 31px; padding: 2px 4px 6px 6px; display: flex; flex-direction: column; justify-content: space-between; }
.commands .ibtn, .snap .ibtn { display: flex; width: 21px; height: 20px; }
.commands .hsep, .snap .hsep { margin: 3px 0 4px; }
.more { width: 21px; height: 12px; }
.snap { width: 23px; padding: 2px 2px 5px 0; display: flex; flex-direction: column; justify-content: space-between; }

.palette { height: 12px; display: flex; border-top: 1px solid #eee; }
.palette button { flex: 1; min-width: 0; }
.pscroll { height: 9px; background: #cdcdcd; padding: 2px; }
.pscroll i { display: block; width: 243px; height: 4px; border-radius: 2px; background: #777b7b; }

.status { height: 19px; display: flex; align-items: center; padding-right: 5px; }
.style { display: grid; grid-template-columns: 21px 31px 20px; column-gap: 5px; line-height: 9px; width: 84px; }
.end, dd { text-align: right; }
.style em { padding-left: 9px; }
.style .sw { height: 9px; margin-left: 4px; background: #f00; }
.op { width: 38px; }
.op input { padding-left: 1px; }
.status .vsep { margin-right: 3px; }
.status .field + .vsep { margin: 0 0 0 12px; }
.layer { width: 46px; font-size: 6px; font-weight: 500; }
.layer::after { right: 5px; }
p { flex: 1; margin: 0; padding-left: 1px; white-space: nowrap; }
dl { display: grid; grid-template-columns: 10px 20px; line-height: 9px; margin: 0 6px 0 1px; }
dd { margin: 0; }
.zoom { width: 51px; }
.zoom input { padding-left: 4px; }
.spin.zoom button { width: 12px; }
.rot { margin-left: 6px; gap: 6px; }
.rotate { width: 55px; }
.rotate input { padding-left: 7px; }
```
FILE: app.js
```js
// Expands a "name name* | name" list into icon buttons; "*" marks a pressed one, "|" a separator.
document.querySelectorAll('[data-icons]').forEach(function (box) {
  var horizontal = box.classList.contains('icons');
  box.innerHTML = box.dataset.icons.split(' ').map(function (name) {
    if (name === '|') return '<i class="' + (horizontal ? 'vsep' : 'hsep') + '"></i>';
    var on = name.endsWith('*');
    var id = name.replace('*', '');
    return '<button class="ibtn' + (on ? ' on' : '') + '" aria-label="' + id + '"><svg><use href="#' + id + '"/></svg></button>';
  }).join('');
});

var colors = ('000 1a1a1a 333 4d4d4d 666 808080 999 b3b3b3 ccc e6e6e6 ececec f2f2f2 f9f9f9 fff ' +
  '800000 f00 808000 ff0 008000 0f0 008080 0ff 000080 00f 800080 f0f ' +
  '2b0000 550000 800000 aa0000 d40000 ff0000 ff2a2a ff5555 ff8080 ffaaaa ffd5d5 ' +
  '280b0b 501616 782121 a02c2c c83737 d35f5f de8787 e9afaf f4d7d7 ' +
  '241c1c 483737 6c5353 916f6f ac9393 c8b7b7 e3dbdb ' +
  '2b1100 552200 803300 aa4400 d45500 ff6600 ff7f2a ff9955 ffb380 ffccaa ffe6d5 ' +
  '28170b 502d16 784421 a05a2c c87137 d38d5f deaa87 e9c6af f4e3d7 ' +
  '241f1c 483e37 6c5d53 917c6f ac9d93 c8beb7 e3dedb ' +
  '2b2200 554400 806600 aa8800 d4aa00 ffcc00 ffd42a ffdd55 ffe680 ffeeaa fff6d5 ' +
  '28220b 504416 786721 a0892c c8ab37 d3bc5f decd87').split(' ');
document.querySelector('.palette').innerHTML =
  '<button aria-label="None"><svg width="11" height="11" viewBox="0 0 11 11"><path d="M0 0h11v11H0z" fill="#fff"/><path d="M1 1l9 9M10 1 1 10" stroke="#6b1010" stroke-width="1.200"/></svg></button>' +
  colors.map(function (c) { return '<button aria-label="#' + c + '" style="background:#' + c + '"></button>'; }).join('');
```
